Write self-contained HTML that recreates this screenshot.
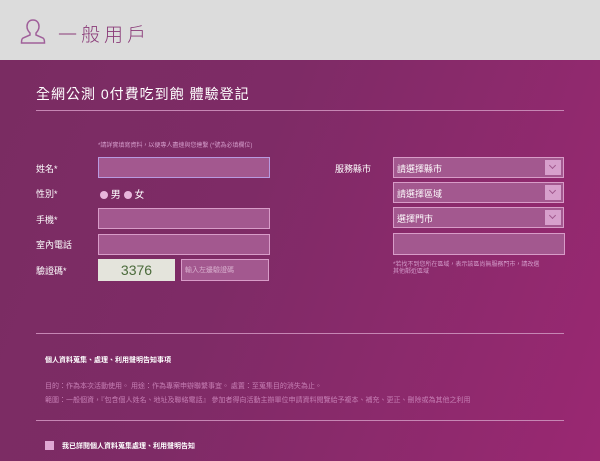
<html><head><style>
body{margin:0;width:600px;height:461px;overflow:hidden;font-family:"Liberation Sans","Noto Sans CJK TC",sans-serif;}
.hd{position:absolute;left:0;top:0;width:600px;height:60px;background:#dcdcdc;}
.hd span{position:absolute;left:58px;top:20px;font-size:19px;color:#8a3a78;letter-spacing:4px;font-family:"Noto Sans CJK TC",sans-serif;font-weight:300;}
.bg{position:absolute;left:0;top:60px;width:600px;height:401px;background:linear-gradient(110deg,#7a2c62 0%,#7e2b66 40%,#9a2872 100%);}
.a{position:absolute;color:#fff;white-space:nowrap;}
.line{position:absolute;left:36px;width:528px;height:1px;background:#c686b4;}
.in{position:absolute;background:#a3588f;border:1px solid #d89cc8;box-sizing:border-box;}
.sel .ar{position:absolute;right:2px;top:2px;width:16px;height:15px;background:#d7a0cc;}
.sel .ar:after{content:"";position:absolute;left:5px;top:3px;width:4px;height:4px;border-right:1px solid #a0588e;border-bottom:1px solid #a0588e;transform:rotate(45deg);}
.lb{font-size:9px;}
</style></head><body>
<div class="hd">
<svg style="position:absolute;left:20px;top:18px" width="26" height="28" viewBox="0 0 26 28" fill="none" stroke="#a0609a" stroke-width="1.5"><path d="M13 2c-4 0-6 3-6 6.5 0 3 1.5 5 3 6.5v2L3 20c-1 .5-1.5 2-1.5 5h23c0-3-.5-4.5-1.5-5l-7-3v-2c1.5-1.5 3-3.5 3-6.5C19 5 17 2 13 2z"/></svg>
<span>一般用戶</span></div>
<div class="bg"></div>
<div class="a" style="left:36px;top:84px;font-size:14px;letter-spacing:1px">全網公測 0付費吃到飽 體驗登記</div>
<div class="line" style="top:110px"></div>
<div class="a" style="left:98px;top:140px;font-size:6px;color:#d49ccb">*請詳實填寫資料，以便專人盡速與您連繫 (*號為必填欄位)</div>
<div class="a lb" style="left:36px;top:162px">姓名*</div>
<div class="in" style="left:98px;top:157px;width:172px;height:21px;border-color:#b89ae0"></div>
<div class="a lb" style="left:36px;top:187px">性別*</div>
<div class="a" style="left:100px;top:186px;font-size:10px"><span style="display:inline-block;width:8px;height:8px;border-radius:50%;background:#e8b6dc;vertical-align:-1px"></span> 男 <span style="display:inline-block;width:8px;height:8px;border-radius:50%;background:#e8b6dc;vertical-align:-1px"></span> 女</div>
<div class="a lb" style="left:36px;top:213px">手機*</div>
<div class="in" style="left:98px;top:208px;width:172px;height:21px"></div>
<div class="a lb" style="left:36px;top:238px">室內電話</div>
<div class="in" style="left:98px;top:234px;width:172px;height:21px"></div>
<div class="a lb" style="left:36px;top:264px">驗證碼*</div>
<div style="position:absolute;left:98px;top:259px;width:77px;height:22px;background:#e4e4dc;color:#4a6a3a;font-size:14px;text-align:center;line-height:22px">3376</div>
<div class="in" style="left:181px;top:259px;width:88px;height:22px"><span style="position:absolute;left:3px;top:5px;font-size:7px;color:#d9b0cf">輸入左邊驗證碼</span></div>
<div class="a lb" style="left:335px;top:162px">服務縣市</div>
<div class="in sel" style="left:393px;top:157px;width:171px;height:21px"><span class="a" style="left:3px;top:4px;font-size:9px">請選擇縣市</span><div class="ar"></div></div>
<div class="in sel" style="left:393px;top:182px;width:171px;height:21px"><span class="a" style="left:3px;top:4px;font-size:9px">請選擇區域</span><div class="ar"></div></div>
<div class="in sel" style="left:393px;top:207px;width:171px;height:21px"><span class="a" style="left:3px;top:4px;font-size:9px">選擇門市</span><div class="ar"></div></div>
<div class="in" style="left:393px;top:233px;width:172px;height:22px"></div>
<div class="a" style="left:393px;top:262px;font-size:6px;color:#d49ccb;line-height:7px">*若找不到您所在區域，表示該區尚無服務門市，請改選<br>其他鄰近區域</div>
<div class="line" style="top:333px"></div>
<div class="a" style="left:45px;top:355px;font-size:7px;font-weight:bold">個人資料蒐集、處理、利用聲明告知事項</div>
<div class="a" style="left:45px;top:381px;font-size:7px;color:#c77fb5">目的：作為本次活動使用。 用途：作為專案申辦聯繫事宜。 處置：至蒐集目的消失為止。</div>
<div class="a" style="left:45px;top:395px;font-size:7px;color:#c77fb5">範圍：一般個資，『包含個人姓名、地址及聯絡電話』 參加者得向活動主辦單位申請資料閱覽給予複本、補充、更正、刪除或為其他之利用</div>
<div class="line" style="top:420px"></div>
<div style="position:absolute;left:45px;top:441px;width:9px;height:9px;background:#e0a8d4"></div>
<div class="a" style="left:62px;top:441px;font-size:7px;font-weight:bold">我已詳閱個人資料蒐集處理、利用聲明告知</div>
</body></html>
